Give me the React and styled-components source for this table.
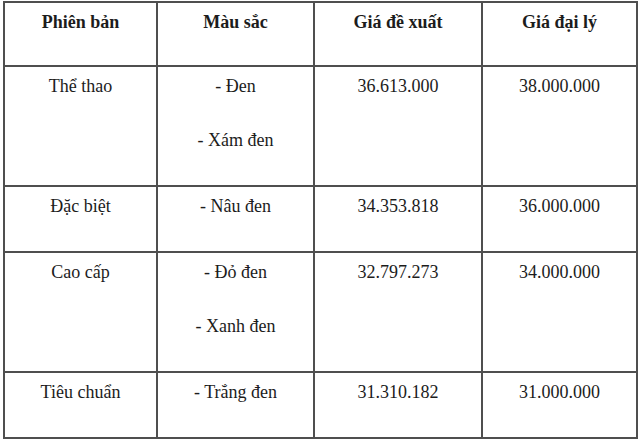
import React from 'react';
import styled, { createGlobalStyle } from 'styled-components';

const GlobalStyle = createGlobalStyle`
  body {
    margin: 0;
    background: #fff;
    font-family: "Liberation Serif", "Times New Roman", serif;
  }
`;

const Page = styled.div`
  padding: 1px 0 0 3px;
`;

const Table = styled.table`
  border-collapse: separate;
  border-spacing: 2px;
  background: #4f4f4f;
  table-layout: fixed;
  width: 635px;
  font-family: "Liberation Serif", "Times New Roman", serif;
  font-size: 18px;
  line-height: 22px;
  color: #1c1c1c;
`;

const Cell = styled.td`
  background: #fff;
  text-align: center;
  vertical-align: top;
  padding: 8px 4px 34px;
`;

const HeadCell = styled(Cell).attrs({ as: 'th' })`
  padding-bottom: 32px;
  font-weight: 700;
`;

const Line = styled.div`
  & + & {
    margin-top: 32px;
  }
`;

const rows = [
  ['Thể thao', ['- Đen', '- Xám đen'], '36.613.000', '38.000.000'],
  ['Đặc biệt', ['- Nâu đen'], '34.353.818', '36.000.000'],
  ['Cao cấp', ['- Đỏ đen', '- Xanh đen'], '32.797.273', '34.000.000'],
  ['Tiêu chuẩn', ['- Trắng đen'], '31.310.182', '31.000.000'],
];

export default function App() {
  return (
    <Page>
      <GlobalStyle />
      <Table>
        <colgroup>
          <col style={{ width: 151 }} />
          <col style={{ width: 155 }} />
          <col style={{ width: 166 }} />
          <col style={{ width: 153 }} />
        </colgroup>
        <thead>
          <tr>
            <HeadCell>Phiên bản</HeadCell>
            <HeadCell>Màu sắc</HeadCell>
            <HeadCell>Giá đề xuất</HeadCell>
            <HeadCell>Giá đại lý</HeadCell>
          </tr>
        </thead>
        <tbody>
          {rows.map(([name, colors, suggested, dealer]) => (
            <tr key={name}>
              <Cell>{name}</Cell>
              <Cell>
                {colors.map((c) => (
                  <Line key={c}>{c}</Line>
                ))}
              </Cell>
              <Cell>{suggested}</Cell>
              <Cell>{dealer}</Cell>
            </tr>
          ))}
        </tbody>
      </Table>
    </Page>
  );
}
